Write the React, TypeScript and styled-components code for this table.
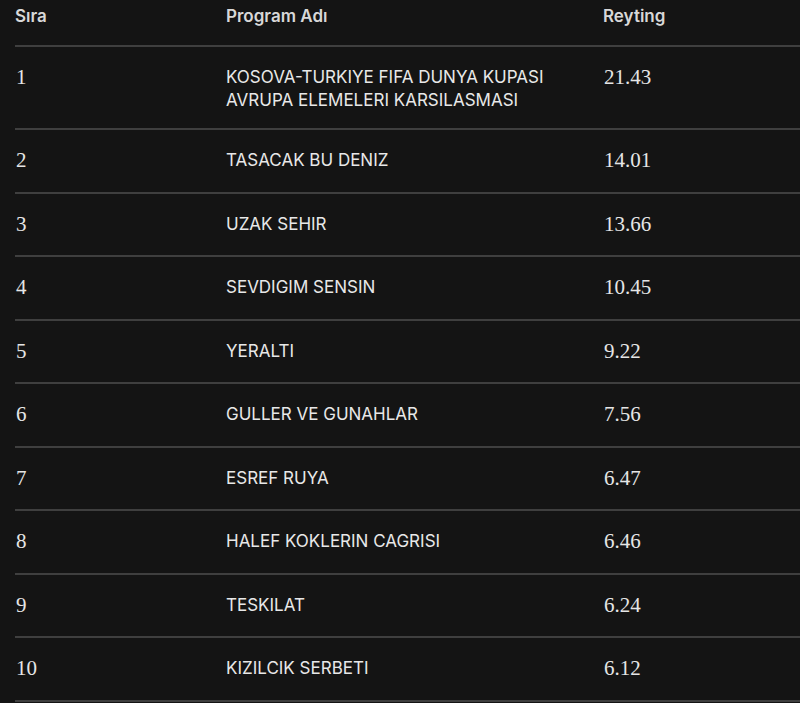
import React from "react";
import styled, { createGlobalStyle } from "styled-components";

const Global = createGlobalStyle`
  html, body { margin: 0; padding: 0; background: #141414; }
  body { width: 800px; height: 703px; overflow: hidden; }
`;

const Page = styled.div`
  padding: 0 0 0 15px;
  background: #141414;
  min-height: 703px;
  box-sizing: border-box;
`;

const Row = styled.div`
  display: grid;
  grid-template-columns: 211px 377px 1fr;
  align-items: start;
  border-bottom: 2px solid #3f3f3f;
  padding: 18px 0;
`;

const HeaderRow = styled(Row)`
  padding: 4px 0 17px;
`;

const HeadCell = styled.div`
  font-family: Inter, "Noto Sans", sans-serif;
  font-weight: 600;
  font-size: 17px;
  line-height: 24px;
  color: #d8d8d8;
`;

const NumCell = styled.div`
  font-family: "Liberation Serif", "DejaVu Serif", serif;
  font-size: 21px;
  line-height: 25.5px;
  color: #e6e6e6;
  padding-left: 1px;
`;

const NameCell = styled.div`
  font-family: Inter, "Noto Sans", sans-serif;
  font-size: 17px;
  line-height: 22.5px;
  color: #e8e8e8;
  padding-top: 1px;
  margin-bottom: -1px;
`;

const rows: [number, string[], string][] = [
  [1, ["KOSOVA-TURKIYE FIFA DUNYA KUPASI", "AVRUPA ELEMELERI KARSILASMASI"], "21.43"],
  [2, ["TASACAK BU DENIZ"], "14.01"],
  [3, ["UZAK SEHIR"], "13.66"],
  [4, ["SEVDIGIM SENSIN"], "10.45"],
  [5, ["YERALTI"], "9.22"],
  [6, ["GULLER VE GUNAHLAR"], "7.56"],
  [7, ["ESREF RUYA"], "6.47"],
  [8, ["HALEF KOKLERIN CAGRISI"], "6.46"],
  [9, ["TESKILAT"], "6.24"],
  [10, ["KIZILCIK SERBETI"], "6.12"],
];

export default function App() {
  return (
    <>
      <Global />
      <Page>
        <HeaderRow>
          <HeadCell>Sıra</HeadCell>
          <HeadCell>Program Adı</HeadCell>
          <HeadCell>Reyting</HeadCell>
        </HeaderRow>
        {rows.map(([n, name, r]) => (
          <Row key={n}>
            <NumCell>{n}</NumCell>
            <NameCell>
              {name.map((l, i) => (
                <React.Fragment key={i}>
                  {i > 0 && <br />}
                  {l}
                </React.Fragment>
              ))}
            </NameCell>
            <NumCell>{r}</NumCell>
          </Row>
        ))}
      </Page>
    </>
  );
}
